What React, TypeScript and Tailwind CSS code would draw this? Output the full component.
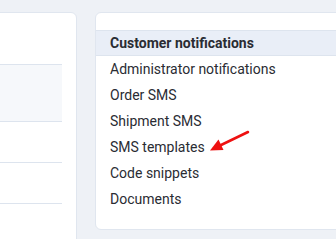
import React from 'react';

const items = [
  'Administrator notifications',
  'Order SMS',
  'Shipment SMS',
  'SMS templates',
  'Code snippets',
  'Documents',
];

export default function App() {
  return (
    <div className="relative h-[239px] w-[336px] overflow-hidden bg-[#eef1f6] font-['Roboto',sans-serif] text-[14px] text-[#2a2c33]">
      <div className="flex items-start gap-[18px] pt-3">
        {/* left panel (cut off) */}
        <div className="-ml-4 h-[260px] w-[93px] shrink-0 rounded-md border border-[#e0e6ef] bg-white pr-[14px]">
          <div className="h-[51px]" />
          <div className="h-[58px] border-y border-[#dde4ee] bg-[#f6f8fb]" />
          <div className="h-[41px] border-b border-[#dde4ee]" />
          <div className="h-[41px] border-b border-[#dde4ee]" />
        </div>

        {/* settings menu */}
        <div className="w-[260px] shrink-0 rounded-md border border-[#e0e6ef] bg-white pb-[17px] pt-[17px]">
          <div className="flex h-[26px] items-center border-y border-[#dde4ee] bg-[#e9eef7] pl-[14px] font-bold">
            Customer notifications
          </div>
          {items.map((label) => (
            <div key={label} className="flex h-[26px] items-center pl-[14px]">
              {label}
            </div>
          ))}
        </div>
      </div>

      <svg className="pointer-events-none absolute left-0 top-0" width="336" height="239">
        <line x1="248" y1="132" x2="219" y2="146" stroke="#ee1111" strokeWidth="2.5" strokeLinecap="round" />
        <polygon points="210,150.5 223.5,150 218.5,139.5" fill="#ee1111" />
      </svg>
    </div>
  );
}
